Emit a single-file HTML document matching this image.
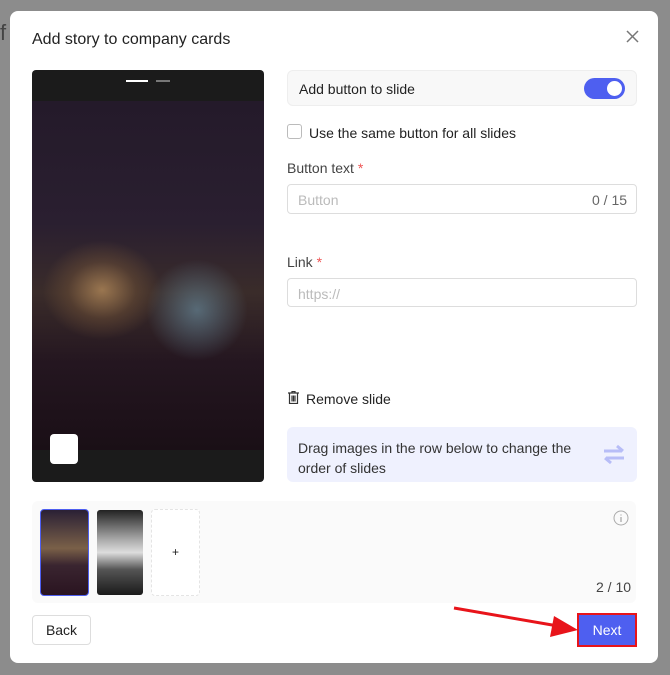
<!DOCTYPE html>
<html><head><style>
*{box-sizing:border-box;margin:0;padding:0}
body{width:670px;height:675px;background:#8c8c8c;font-family:"Liberation Sans",sans-serif;position:relative;overflow:hidden;color:#222}
.m{position:absolute;left:10px;top:11px;width:648px;height:652px;background:#fff;border-radius:8px}
.a{position:absolute}
</style></head><body>
<div class="a" style="left:0;top:20px;font-size:22px;color:#444">f</div>
<div class="m"></div>
<div class="a" style="left:32px;top:31px;font-size:16px;color:#222">Add story to company cards</div>
<svg class="a" style="left:626px;top:30px" width="13" height="13"><path d="M1 1L12 12M12 1L1 12" stroke="#777" stroke-width="1.5"/></svg>
<div class="a" style="left:32px;top:70px;width:232px;height:412px;background:#1b1b1b;border-radius:4px;overflow:hidden">
 <div class="a" style="left:94px;top:10px;width:22px;height:2px;background:#fff"></div>
 <div class="a" style="left:124px;top:10px;width:14px;height:2px;background:#777"></div>
 <div class="a" style="left:0;top:31px;width:232px;height:349px;background:linear-gradient(180deg,#241a2a 0%,#2a1f30 35%,#3a2c2a 55%,#241620 75%,#1a0f16 100%)"></div>
 <div class="a" style="left:10px;top:170px;width:120px;height:100px;background:radial-gradient(ellipse,#9a7650 0%,rgba(110,80,55,.5) 40%,transparent 70%)"></div>
 <div class="a" style="left:110px;top:185px;width:110px;height:110px;background:radial-gradient(ellipse,rgba(110,150,170,.6) 0%,transparent 65%)"></div>
 <div class="a" style="left:18px;top:364px;width:28px;height:30px;background:#fff;border-radius:4px"></div>
</div>
<div class="a" style="left:287px;top:70px;width:350px;height:36px;background:#f8f8f8;border:1px solid #eee;border-radius:6px"></div>
<div class="a" style="left:299px;top:81px;font-size:14px">Add button to slide</div>
<div class="a" style="left:584px;top:78px;width:41px;height:21px;background:#4e5ff0;border-radius:11px"><div class="a" style="right:3px;top:3px;width:15px;height:15px;background:#fff;border-radius:50%"></div></div>
<div class="a" style="left:287px;top:124px;width:15px;height:15px;border:1px solid #bbb;border-radius:3px"></div>
<div class="a" style="left:309px;top:125px;font-size:14px">Use the same button for all slides</div>
<div class="a" style="left:287px;top:160px;font-size:14px;color:#444">Button text <span style="color:#e55">*</span></div>
<div class="a" style="left:287px;top:184px;width:350px;height:30px;border:1px solid #ddd;border-radius:4px"></div>
<div class="a" style="left:298px;top:192px;font-size:14px;color:#bbb">Button</div>
<div class="a" style="left:592px;top:192px;font-size:14px;color:#666">0 / 15</div>
<div class="a" style="left:287px;top:254px;font-size:14px;color:#444">Link <span style="color:#e55">*</span></div>
<div class="a" style="left:287px;top:278px;width:350px;height:29px;border:1px solid #ddd;border-radius:4px"></div>
<div class="a" style="left:298px;top:286px;font-size:14px;color:#bbb">https://</div>
<svg class="a" style="left:288px;top:391px" width="11" height="13"><path d="M0 2H11M4 2V0.5H7V2M1.5 2.5V12.5H9.5V2.5M4 4.5V10.5M5.5 4.5V10.5M7 4.5V10.5" stroke="#333" fill="none" stroke-width="1.2"/></svg>
<div class="a" style="left:306px;top:391px;font-size:14px">Remove slide</div>
<div class="a" style="left:287px;top:427px;width:350px;height:55px;background:#eff1fe;border-radius:6px"></div>
<div class="a" style="left:298px;top:438px;font-size:14px;line-height:20px;color:#333">Drag images in the row below to change the<br>order of slides</div>
<svg class="a" style="left:602px;top:443px" width="24" height="24"><path d="M2 8H20M15 3L21 8M22 15H4M9 20L3 15" stroke="#b7bdf7" stroke-width="3" fill="none"/></svg>
<div class="a" style="left:32px;top:501px;width:604px;height:102px;background:#fafafa;border-radius:6px"></div>
<div class="a" style="left:40px;top:509px;width:49px;height:87px;border:1px solid #4e5ff0;border-radius:4px;background:linear-gradient(180deg,#2a2035 0%,#7a6048 45%,#3a2530 65%,#2a1420 100%)"></div>
<div class="a" style="left:97px;top:510px;width:46px;height:85px;border-radius:3px;background:linear-gradient(180deg,#222 0%,#aaa 35%,#ddd 50%,#555 70%,#1a1a1a 100%)"></div>
<div class="a" style="left:151px;top:509px;width:49px;height:87px;border:1px dashed #e4e4e4;border-radius:4px;background:#fff;text-align:center;line-height:85px;font-size:12px">+</div>
<svg class="a" style="left:613px;top:510px" width="16" height="16"><circle cx="8" cy="8" r="7" stroke="#aaa" fill="none"/><path d="M8 7V12M8 4.5V5.5" stroke="#aaa" stroke-width="1.3"/></svg>
<div class="a" style="left:596px;top:579px;font-size:14px;color:#444">2 / 10</div>
<div class="a" style="left:32px;top:615px;width:59px;height:30px;border:1px solid #ddd;border-radius:4px;font-size:14px;text-align:center;line-height:28px">Back</div>
<div class="a" style="left:577px;top:613px;width:60px;height:34px;border:2px solid #e8141a;background:#4e5ff0;color:#fff;font-size:14px;text-align:center;line-height:30px">Next</div>
<svg class="a" style="left:450px;top:600px" width="130" height="40"><path d="M4 8L108 26" stroke="#e8141a" stroke-width="3"/><path d="M128 30L104 16L100 37Z" fill="#e8141a"/></svg>
</body></html>
